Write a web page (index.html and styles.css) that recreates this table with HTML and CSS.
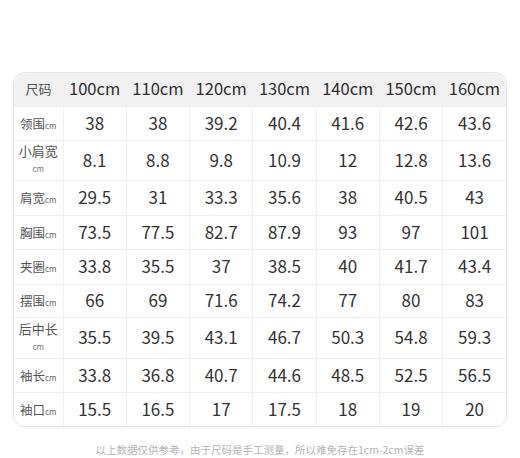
FILE: index.html
```html
<!DOCTYPE html>
<html lang="zh">
<head>
<meta charset="utf-8">
<link rel="stylesheet" href="styles.css">
</head>
<body>
<div class="page">
  <div class="card">
    <table class="size-table">
      <colgroup>
        <col class="c-label"><col><col><col><col><col><col><col>
      </colgroup>
      <thead>
        <tr class="r-head">
          <th class="h-label">尺码</th>
          <th>100cm</th><th>110cm</th><th>120cm</th><th>130cm</th><th>140cm</th><th>150cm</th><th>160cm</th>
        </tr>
      </thead>
      <tbody>
        <tr class="r-34">
          <td class="lbl">领围<small>cm</small></td>
          <td>38</td><td>38</td><td>39.2</td><td>40.4</td><td>41.6</td><td>42.6</td><td>43.6</td>
        </tr>
        <tr class="r-40">
          <td class="lbl two"><span class="l1">小肩宽</span><span class="l2">cm</span></td>
          <td>8.1</td><td>8.8</td><td>9.8</td><td>10.9</td><td>12</td><td>12.8</td><td>13.6</td>
        </tr>
        <tr class="r-35">
          <td class="lbl">肩宽<small>cm</small></td>
          <td>29.5</td><td>31</td><td>33.3</td><td>35.6</td><td>38</td><td>40.5</td><td>43</td>
        </tr>
        <tr class="r-34">
          <td class="lbl">胸围<small>cm</small></td>
          <td>73.5</td><td>77.5</td><td>82.7</td><td>87.9</td><td>93</td><td>97</td><td>101</td>
        </tr>
        <tr class="r-35">
          <td class="lbl">夹圈<small>cm</small></td>
          <td>33.8</td><td>35.5</td><td>37</td><td>38.5</td><td>40</td><td>41.7</td><td>43.4</td>
        </tr>
        <tr class="r-33">
          <td class="lbl">摆围<small>cm</small></td>
          <td>66</td><td>69</td><td>71.6</td><td>74.2</td><td>77</td><td>80</td><td>83</td>
        </tr>
        <tr class="r-41">
          <td class="lbl two"><span class="l1">后中长</span><span class="l2">cm</span></td>
          <td>35.5</td><td>39.5</td><td>43.1</td><td>46.7</td><td>50.3</td><td>54.8</td><td>59.3</td>
        </tr>
        <tr class="r-34">
          <td class="lbl">袖长<small>cm</small></td>
          <td>33.8</td><td>36.8</td><td>40.7</td><td>44.6</td><td>48.5</td><td>52.5</td><td>56.5</td>
        </tr>
        <tr class="r-34">
          <td class="lbl">袖口<small>cm</small></td>
          <td>15.5</td><td>16.5</td><td>17</td><td>17.5</td><td>18</td><td>19</td><td>20</td>
        </tr>
      </tbody>
    </table>
  </div>
  <p class="note">以上数据仅供参考，由于尺码是手工测量，所以难免存在1cm-2cm误差</p>
</div>
</body>
</html>
```
FILE: styles.css
```css
html, body {
  margin: 0;
  padding: 0;
  background: #ffffff;
}
body {
  font-family: "Noto Sans CJK SC", "Noto Sans", sans-serif;
  color: #333333;
}
.page {
  width: 520px;
  height: 458px;
  padding: 72px 13px 0 13px;
  box-sizing: border-box;
}
.card {
  border: 1px solid #e6e6e6;
  border-radius: 12px;
  overflow: hidden;
  box-shadow: 0 1px 3px rgba(0,0,0,0.04);
}
.size-table {
  width: 100%;
  table-layout: fixed;
  border-collapse: collapse;
}
.c-label { width: 49px; }
.size-table th,
.size-table td {
  padding: 0;
  text-align: center;
  vertical-align: middle;
  line-height: 1.2;
}
.r-head {
  height: 33px;
  background: #f1f1f1;
}
.r-head th {
  font-weight: 400;
  font-size: 16.5px;
  color: #2e2e2e;
}
.r-head th.h-label {
  font-size: 13px;
  color: #555;
}
tbody td {
  font-size: 17px;
  color: #333;
  border-top: 1px solid #efefef;
  border-left: 1px solid #f1f1f1;
}
tbody td.lbl {
  border-left: none;
  font-size: 12.5px;
  color: #555;
}
.lbl small {
  font-size: 8px;
  color: #666;
}
.lbl.two .l1 {
  display: block;
  font-size: 13px;
  line-height: 18px;
}
.lbl.two .l2 {
  display: block;
  font-size: 8px;
  line-height: 18px;
  color: #777;
}
.r-33 { height: 33px; }
.r-34 { height: 34px; }
.r-35 { height: 35px; }
.r-40 { height: 40px; }
.r-41 { height: 41px; }
.note {
  margin: 16px 0 0 0;
  line-height: 14px;
  text-align: center;
  font-size: 10.5px;
  color: #b5b5b5;
}
```
